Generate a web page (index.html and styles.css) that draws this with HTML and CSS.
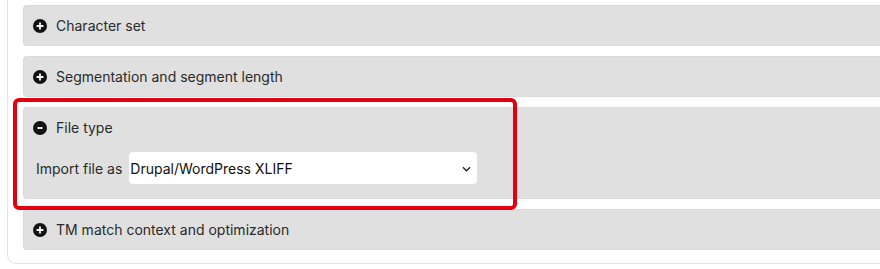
FILE: index.html
```html
<!DOCTYPE html>
<html lang="en">
<head>
<meta charset="utf-8">
<title>Settings</title>
<link rel="stylesheet" href="styles.css">
</head>
<body>
<div class="container">
  <div class="panel">
    <div class="panel-head">
      <svg class="icon" viewBox="0 0 14 14"><circle cx="7" cy="7" r="7" fill="#111"/><path d="M7 3.6v6.8M3.6 7h6.8" stroke="#fff" stroke-width="1.8"/></svg>
      <span>Character set</span>
    </div>
  </div>
  <div class="panel">
    <div class="panel-head">
      <svg class="icon" viewBox="0 0 14 14"><circle cx="7" cy="7" r="7" fill="#111"/><path d="M7 3.6v6.8M3.6 7h6.8" stroke="#fff" stroke-width="1.8"/></svg>
      <span>Segmentation and segment length</span>
    </div>
  </div>
  <div class="panel panel-open highlighted">
    <div class="panel-head">
      <svg class="icon" viewBox="0 0 14 14"><circle cx="7" cy="7" r="7" fill="#111"/><path d="M4.4 7h5.2" stroke="#fff" stroke-width="1.8"/></svg>
      <span>File type</span>
    </div>
    <div class="panel-body">
      <label class="field-label" for="imp">Import file as</label>
      <div class="select-wrap">
        <select id="imp" class="select">
          <option>Drupal/WordPress XLIFF</option>
        </select>
        <svg class="chevron" viewBox="0 0 10 6"><path d="M1 1l4 4 4-4" fill="none" stroke="#222" stroke-width="1.5"/></svg>
      </div>
    </div>
  </div>
  <div class="panel">
    <div class="panel-head">
      <svg class="icon" viewBox="0 0 14 14"><circle cx="7" cy="7" r="7" fill="#111"/><path d="M7 3.6v6.8M3.6 7h6.8" stroke="#fff" stroke-width="1.8"/></svg>
      <span>TM match context and optimization</span>
    </div>
  </div>
</div>
</body>
</html>
```

FILE: styles.css
```css
html, body {
  margin: 0;
  padding: 0;
  background: #fff;
  overflow: hidden;
}
body {
  font-family: Inter, "Noto Sans", sans-serif;
  font-size: 14px;
  color: #2a2a2a;
}
.container {
  margin-left: 7px;
  box-sizing: border-box;
  width: calc(100% - 7px);
  border-left: 1px solid #e4e4e4;
  border-bottom: 1px solid #e4e4e4;
  border-radius: 0 0 0 9px;
  padding: 5px 0 13px 15px;
  display: flex;
  flex-direction: column;
  gap: 10px;
}
.panel {
  background: #e0e0e0;
  border: 1px solid #dadada;
  border-right: none;
  border-radius: 4px 0 0 4px;
  box-sizing: border-box;
}
.panel-head {
  height: 39px;
  display: flex;
  align-items: center;
  gap: 9px;
  padding-left: 9px;
}
.icon {
  width: 14px;
  height: 14px;
  flex: none;
}
.panel-body {
  display: flex;
  align-items: center;
  gap: 7px;
  padding: 5px 0 14px 12px;
}
.field-label {
  color: #2a2a2a;
}
.select-wrap {
  position: relative;
  width: 348px;
  height: 32px;
}
.select {
  appearance: none;
  -webkit-appearance: none;
  width: 100%;
  height: 100%;
  border: none;
  border-radius: 4px;
  background: #fff;
  font-family: Inter, "Noto Sans", sans-serif;
  font-size: 14px;
  color: #111;
  padding: 0 24px 0 1px;
  margin: 0;
}
.chevron {
  position: absolute;
  right: 6px;
  top: 14px;
  width: 9px;
  height: 6px;
  pointer-events: none;
}
.highlighted {
  position: relative;
}
.highlighted::after {
  content: "";
  position: absolute;
  left: -11px;
  top: -10px;
  width: 504px;
  height: 112px;
  border: 4px solid #e3000f;
  border-radius: 6px;
  box-sizing: border-box;
  pointer-events: none;
}
```
